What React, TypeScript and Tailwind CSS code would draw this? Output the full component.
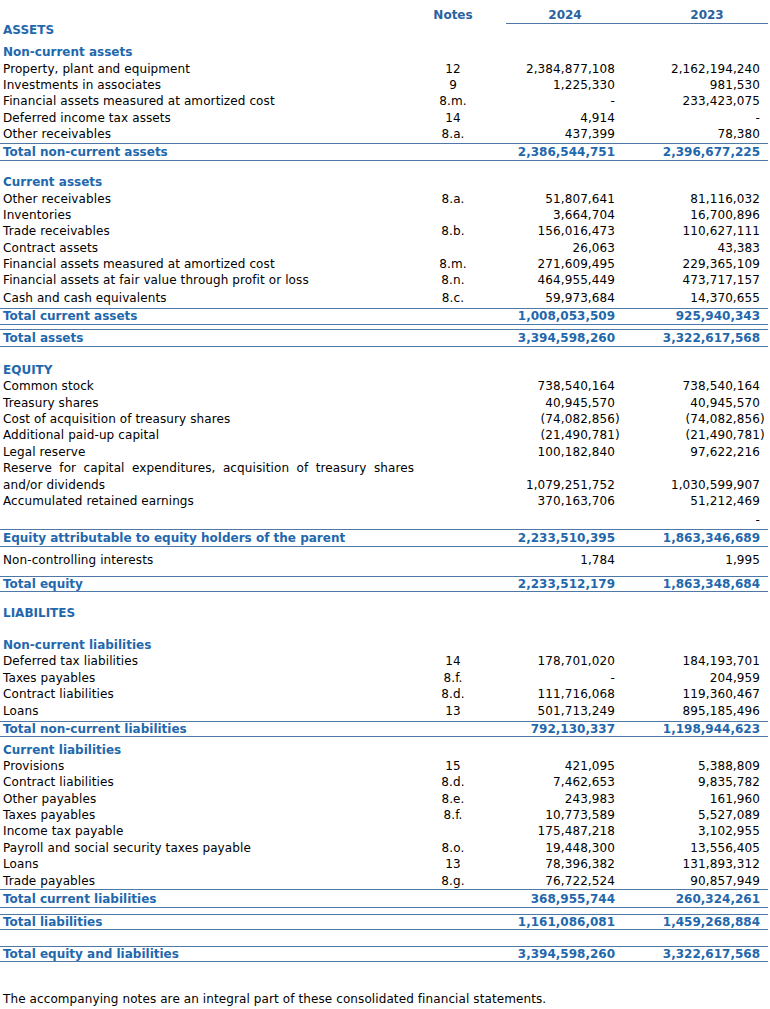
import React from "react";

type Row =
  | { k: "head"; label: string; cls?: string }
  | { k: "item"; label: string; note?: string; a?: string; b?: string; cls?: string; justify?: boolean }
  | { k: "total"; label: string; a: string; b: string; cls: string };

const grid = "grid grid-cols-[420px_66px_129px_145px_1fr]";

function Num({ v }: { v?: string }) {
  if (!v) return null;
  if (v.startsWith("(")) {
    return (
      <span>
        {v.slice(0, -1)}
        <span className="inline-block w-0">)</span>
      </span>
    );
  }
  return <span>{v}</span>;
}

const rows: Row[] = [
  { k: "head", label: "Non-current assets", cls: "mt-[7.3px]" },
  { k: "item", label: "Property, plant and equipment", note: "12", a: "2,384,877,108", b: "2,162,194,240" },
  { k: "item", label: "Investments in associates", note: "9", a: "1,225,330", b: "981,530" },
  { k: "item", label: "Financial assets measured at amortized cost", note: "8.m.", a: "-", b: "233,423,075" },
  { k: "item", label: "Deferred income tax assets", note: "14", a: "4,914", b: "-" },
  { k: "item", label: "Other receivables", note: "8.a.", a: "437,399", b: "78,380" },
  { k: "total", label: "Total non-current assets", a: "2,386,544,751", b: "2,396,677,225", cls: "h-[18px]" },

  { k: "head", label: "Current assets", cls: "mt-[13.5px]" },
  { k: "item", label: "Other receivables", note: "8.a.", a: "51,807,641", b: "81,116,032" },
  { k: "item", label: "Inventories", a: "3,664,704", b: "16,700,896" },
  { k: "item", label: "Trade receivables", note: "8.b.", a: "156,016,473", b: "110,627,111" },
  { k: "item", label: "Contract assets", a: "26,063", b: "43,383" },
  { k: "item", label: "Financial assets measured at amortized cost", note: "8.m.", a: "271,609,495", b: "229,365,109" },
  { k: "item", label: "Financial assets at fair value through profit or loss", note: "8.n.", a: "464,955,449", b: "473,717,157" },
  { k: "item", label: "Cash and cash equivalents", note: "8.c.", a: "59,973,684", b: "14,370,655", cls: "mt-[1.5px]" },
  { k: "total", label: "Total current assets", a: "1,008,053,509", b: "925,940,343", cls: "mt-[1px] h-[17px]" },
  { k: "total", label: "Total assets", a: "3,394,598,260", b: "3,322,617,568", cls: "mt-[4px] h-[18px]" },

  { k: "head", label: "EQUITY", cls: "mt-[15px]" },
  { k: "item", label: "Common stock", a: "738,540,164", b: "738,540,164" },
  { k: "item", label: "Treasury shares", a: "40,945,570", b: "40,945,570" },
  { k: "item", label: "Cost of acquisition of treasury shares", a: "(74,082,856)", b: "(74,082,856)" },
  { k: "item", label: "Additional paid-up capital", a: "(21,490,781)", b: "(21,490,781)" },
  { k: "item", label: "Legal reserve", a: "100,182,840", b: "97,622,216" },
  { k: "item", label: "Reserve for capital expenditures, acquisition of treasury shares", justify: true },
  { k: "item", label: "and/or dividends", a: "1,079,251,752", b: "1,030,599,907" },
  { k: "item", label: "Accumulated retained earnings", a: "370,163,706", b: "51,212,469" },
  { k: "item", label: "", b: "-", cls: "mt-[3px]" },
  { k: "total", label: "Equity attributable to equity holders of the parent", a: "2,233,510,395", b: "1,863,346,689", cls: "h-[18px]" },
  { k: "item", label: "Non-controlling interests", a: "1,784", b: "1,995", cls: "h-[30px] pb-[2px]" },
  { k: "total", label: "Total equity", a: "2,233,512,179", b: "1,863,348,684", cls: "-mt-px h-[16px]" },

  { k: "head", label: "LIABILITES", cls: "mt-[13px]" },
  { k: "head", label: "Non-current liabilities", cls: "mt-[16px]" },
  { k: "item", label: "Deferred tax liabilities", note: "14", a: "178,701,020", b: "184,193,701" },
  { k: "item", label: "Taxes payables", note: "8.f.", a: "-", b: "204,959" },
  { k: "item", label: "Contract liabilities", note: "8.d.", a: "111,716,068", b: "119,360,467" },
  { k: "item", label: "Loans", note: "13", a: "501,713,249", b: "895,185,496" },
  { k: "total", label: "Total non-current liabilities", a: "792,130,337", b: "1,198,944,623", cls: "mt-[1.5px] h-[16px]" },

  { k: "head", label: "Current liabilities", cls: "mt-[5px]" },
  { k: "item", label: "Provisions", note: "15", a: "421,095", b: "5,388,809" },
  { k: "item", label: "Contract liabilities", note: "8.d.", a: "7,462,653", b: "9,835,782" },
  { k: "item", label: "Other payables", note: "8.e.", a: "243,983", b: "161,960" },
  { k: "item", label: "Taxes payables", note: "8.f.", a: "10,773,589", b: "5,527,089" },
  { k: "item", label: "Income tax payable", a: "175,487,218", b: "3,102,955" },
  { k: "item", label: "Payroll and social security taxes payable", note: "8.o.", a: "19,448,300", b: "13,556,405" },
  { k: "item", label: "Loans", note: "13", a: "78,396,382", b: "131,893,312" },
  { k: "item", label: "Trade payables", note: "8.g.", a: "76,722,524", b: "90,857,949" },
  { k: "total", label: "Total current liabilities", a: "368,955,744", b: "260,324,261", cls: "h-[19px]" },
  { k: "total", label: "Total liabilities", a: "1,161,086,081", b: "1,459,268,884", cls: "mt-[5.5px] h-[16.5px]" },
  { k: "total", label: "Total equity and liabilities", a: "3,394,598,260", b: "3,322,617,568", cls: "mt-[15.5px] h-[16.5px]" },
];

function RowView({ r }: { r: Row }) {
  if (r.k === "head") {
    return <div className={`h-[16.4px] leading-[16.4px] pl-[3px] font-bold text-[#1f68ad] ${r.cls ?? ""}`}>{r.label}</div>;
  }
  if (r.k === "total") {
    return (
      <div className={`${grid} items-center border-y border-[#4f78a6] font-bold text-[#1f68ad] ${r.cls}`}>
        <div className="pl-[3px] leading-none">{r.label}</div>
        <div />
        <div className="text-right leading-none">{r.a}</div>
        <div className="text-right leading-none">{r.b}</div>
      </div>
    );
  }
  return (
    <div className={`${grid} items-center h-[16.4px] text-black tracking-[0.1px] ${r.cls ?? ""}`}>
      <div className={`pl-[3px] pr-[6px] whitespace-nowrap ${r.justify ? "text-justify [text-align-last:justify]" : ""}`}>{r.label}</div>
      <div className="text-center">{r.note}</div>
      <div className="text-right"><Num v={r.a} /></div>
      <div className="text-right"><Num v={r.b} /></div>
    </div>
  );
}

export default function App() {
  return (
    <div className="w-[770px] h-[1009px] bg-white overflow-hidden text-[12px] leading-[16.4px]" style={{ fontFamily: '"DejaVu Sans", Verdana, sans-serif' }}>
      <div className="w-[768px]">
        {/* column headings */}
        <div className="flex h-[24px] font-bold text-[#2a62a0]">
          <div className="w-[420px]" />
          <div className="w-[66px] pt-[7px] text-center leading-[16px]">Notes</div>
          <div className="w-[20px]" />
          <div className="grid flex-1 grid-cols-[118px_1fr] border-b border-[#4f78a6] pt-[7px] leading-[16px]">
            <div className="text-center">2024</div>
            <div className="pl-[22px] text-center">2023</div>
          </div>
        </div>
        <div className="h-[13px] leading-[13px] pl-[3px] font-bold text-[#1f68ad]">ASSETS</div>
        {rows.map((r, i) => (
          <RowView key={i} r={r} />
        ))}
        <div className="mt-[29px] h-[16.4px] pl-[3px] text-black tracking-[0.1px]">
          The accompanying notes are an integral part of these consolidated financial statements.
        </div>
      </div>
    </div>
  );
}
